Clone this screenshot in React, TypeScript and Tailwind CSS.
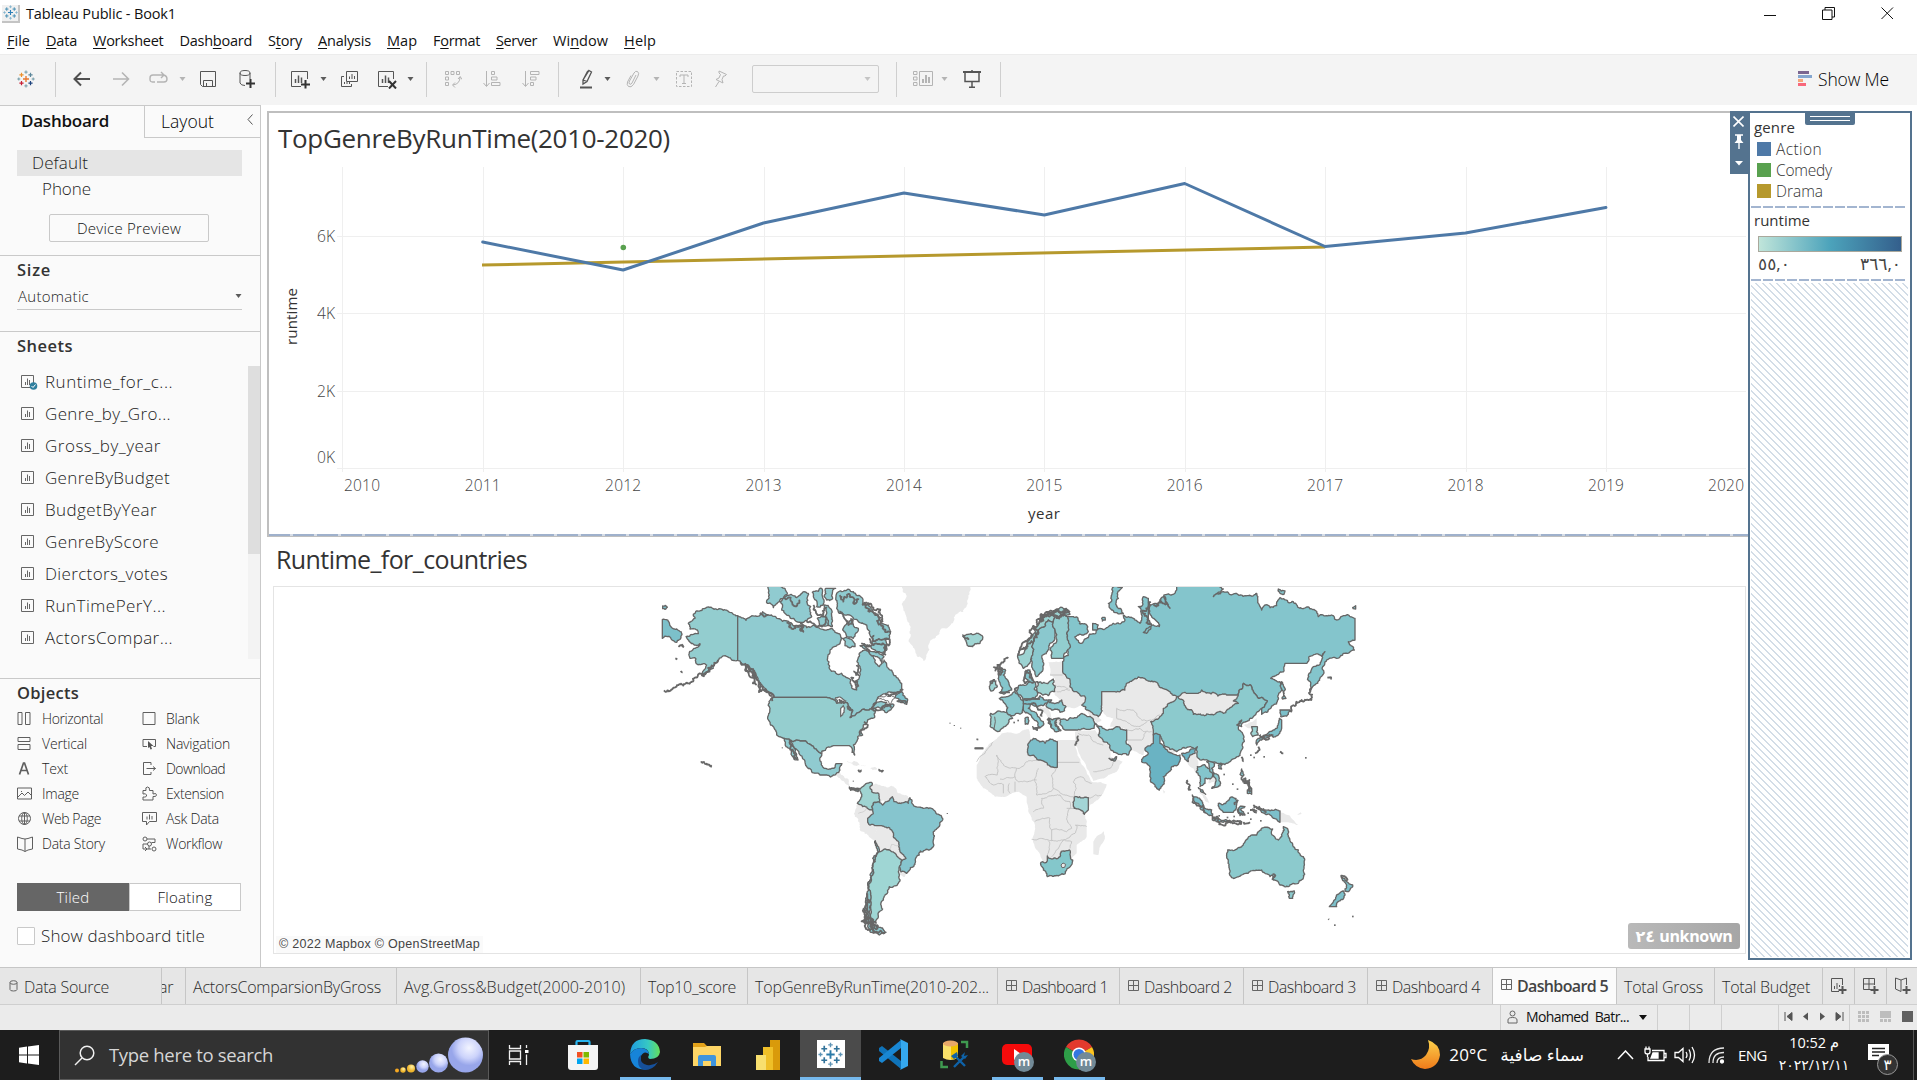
import { useLayoutEffect, useRef, useState, type ReactNode } from "react";

/* Text whose letter spacing is adjusted so that it spans exactly `w` pixels. */
function Fit({ w, className = "", children }: { w: number; className?: string; children: ReactNode }) {
  const ref = useRef<HTMLSpanElement>(null);
  const [ls, setLs] = useState(0);
  useLayoutEffect(() => {
    const el = ref.current;
    if (!el) return;
    const n = Math.max(1, (el.textContent || "").length);
    setLs((w - el.getBoundingClientRect().width) / n);
  }, [w]);
  return (
    <span className={`inline-block shrink-0 whitespace-nowrap ${className}`}>
      <span ref={ref} style={{ letterSpacing: `${ls}px` }}>{children}</span>
    </span>
  );
}

function Icon({ w = 18, h = 18, c = "#5b5b5b", sw = 1, className = "", children }: { w?: number; h?: number; c?: string; sw?: number; className?: string; children: ReactNode }) {
  return (
    <svg width={w} height={h} viewBox={`0 0 ${w} ${h}`} fill="none" stroke={c} strokeWidth={sw} className={`block shrink-0 ${className}`}>
      {children}
    </svg>
  );
}

function Mark({ size, colors }: { size: number; colors: string[] }) {
  const plus = (x: number, y: number, r: number, sw: number, c: string) => (
    <path key={`${x}-${y}`} d={`M${x - r} ${y}H${x + r}M${x} ${y - r}V${y + r}`} stroke={c} strokeWidth={sw} />
  );
  return (
    <svg width={size} height={size} viewBox="0 0 24 24" className="block shrink-0">
      {plus(12, 12, 4, 1.8, colors[0])}
      {plus(6, 6.5, 2.8, 1.6, colors[1])}
      {plus(18, 6.5, 2.8, 1.6, colors[2])}
      {plus(6, 17.5, 2.8, 1.6, colors[3])}
      {plus(18, 17.5, 2.8, 1.6, colors[4])}
      {plus(12, 2.8, 2.2, 1.3, colors[5])}
      {plus(12, 21.2, 2.2, 1.3, colors[5])}
      {plus(2.4, 12, 2, 1.3, colors[5])}
      {plus(21.6, 12, 2, 1.3, colors[5])}
    </svg>
  );
}

const Caret = ({ c = "#5b5b5b" }: { c?: string }) => (
  <svg width="7" height="4" viewBox="0 0 7 4" className="block shrink-0"><path d="M0.500 0H6.500L3.500 4Z" fill={c} /></svg>
);

const menu: [string, string, string, number][] = [
  ["", "F", "ile", 23], ["", "D", "ata", 31], ["", "W", "orksheet", 70.500], ["Dash", "b", "oard", 72.500], ["S", "t", "ory", 34], ["", "A", "nalysis", 53],
  ["", "M", "ap", 30], ["F", "o", "rmat", 47], ["", "S", "erver", 41], ["Wi", "n", "dow", 55], ["", "H", "elp", 32],
];

/* One toolbar slot: left edge is reached by the margin after the previous slot. */
function Slot({ ml, children }: { ml: string; children: ReactNode }) {
  return <div className={`shrink-0 ${ml}`}>{children}</div>;
}
const Sep = ({ ml }: { ml: string }) => <div className={`h-[35px] w-px shrink-0 bg-[#cfcfcf] ${ml}`} />;

function Toolbar() {
  const g = "#b4b4b4";
  return (
    <div className="flex h-[51px] shrink-0 items-center border-t border-[#ececec] bg-[#f4f4f4] pb-[2px]">
      <Slot ml="ml-[17px]"><Mark size={18} colors={["#e8762d", "#eb912c", "#5b879b", "#c72035", "#1f447e", "#7099a6"]} /></Slot>
      <Sep ml="ml-[20px]" />
      <Slot ml="ml-[17px]"><Icon sw={2} c="#4f4f4f"><path d="M17 9H1.500M8 2.500L1.500 9L8 15.500" /></Icon></Slot>
      <Slot ml="ml-[21px]"><Icon sw={1.6} c={g}><path d="M1 9H16.500M10 2.500L16.500 9L10 15.500" /></Icon></Slot>
      <Slot ml="ml-[19px]"><Icon w={19} sw={1.4} c={g}><path d="M6 12H3.500Q1 12 1 9.500V8Q1 5 4 5H15M12 2L15 5L12 8M15 5Q18 6 18 9Q18 12 15 12H8" /></Icon></Slot>
      <Slot ml="ml-[11px]"><Caret c={g} /></Slot>
      <Slot ml="ml-[13px]"><Icon c="#555"><path d="M1.500 1.500H16.500V16.500H3.500L1.500 14.500ZM4.500 16V10.500H13.500V16M7.500 16V13" /></Icon></Slot>
      <Slot ml="ml-[21px]"><Icon w={18} h={20} c="#555"><ellipse cx="7" cy="4" rx="5" ry="2.500" /><path d="M2 4V14Q3 16.500 7 16.500M12 4V10" /><path d="M12.500 10V19M8 14.500H17" strokeWidth="2" stroke="#333" /></Icon></Slot>
      <Sep ml="ml-[19px]" />
      <Slot ml="ml-[14px]"><Icon w={20} h={20} c="#555"><path d="M17.500 10V2.500H1.500V17.500H11" /><path d="M5.500 14V10M8.500 14V6.500M11.500 14V8.500" strokeWidth="1.500" /><path d="M15.500 11V19.500M11 15.500H20" strokeWidth="2" stroke="#333" /></Icon></Slot>
      <Slot ml="ml-[10px]"><Caret /></Slot>
      <Slot ml="ml-[13px]"><Icon w={18} h={18} c="#555"><path d="M6.500 1.500H17.500V11.500H6.500ZM9.500 9V6.500M12 9V4M14.500 9V6M4 6.500H1.500V16.500H11.500V14M4.500 14V12M7 14V12M9.500 14V12" /></Icon></Slot>
      <Slot ml="ml-[19px]"><Icon w={20} h={20} c="#555"><path d="M16.500 10V2.500H1.500V17.500H11" /><path d="M5.500 14V10M8.500 14V6.500M11.500 14V8.500" strokeWidth="1.500" /><path d="M12 12L19 19.500M19 12L12 19.500" strokeWidth="2" stroke="#333" /></Icon></Slot>
      <Slot ml="ml-[10px]"><Caret /></Slot>
      <Sep ml="ml-[12px]" />
      <Slot ml="ml-[17px]"><Icon c={g}><path d="M1.500 1.500H4.500V4.500H1.500ZM7 1.500H10V4.500H7ZM12.500 1.500H15.500V4.500H12.500ZM1.500 7H4.500V10H1.500ZM1.500 12.500H4.500V15.500H1.500ZM16 7Q16 14 9 15M14 9L16.200 6.500L18 9.500M11 12.500L8.500 15L11 17.500" /></Icon></Slot>
      <Slot ml="ml-[20px]"><Icon w={19} c={g}><path d="M4.500 1V16M1.500 13L4.500 16.500L7.500 13M9.500 1.500H12.500V4.500H9.500ZM9.500 7H15V10H9.500ZM9.500 12.500H18V15.500H9.500Z" /></Icon></Slot>
      <Slot ml="ml-[20px]"><Icon w={19} c={g}><path d="M4.500 1V16M1.500 13L4.500 16.500L7.500 13M9.500 1.500H18V4.500H9.500ZM9.500 7H15V10H9.500ZM9.500 12.500H12.500V15.500H9.500Z" /></Icon></Slot>
      <Sep ml="ml-[18px]" />
      <Slot ml="ml-[20px]"><Icon w={15} h={20} c="#555" sw={1.300}><path d="M10 1.500L12.500 3L8 12.500L4 15L4 11Z M4 11L8 12.500M4 11L8.500 2.500L10 1.500" /><path d="M1 18.500H13" strokeWidth="2" /></Icon></Slot>
      <Slot ml="ml-[10px]"><Caret /></Slot>
      <Slot ml="ml-[15px]"><Icon w={14} h={18} c={g}><path d="M10 5L6 13Q5 15 3.500 14Q2.500 13 3.500 11L8 3Q9.500 0.500 11.500 1.500Q13.500 3 12 6L7.500 14.500Q5 18 2.500 16.500Q0.500 15 1.500 12L5 5.500" /></Icon></Slot>
      <Slot ml="ml-[13px]"><Caret c={g} /></Slot>
      <Slot ml="ml-[15px]"><Icon c={g}><path d="M1.500 1.500H16.500V16.500H1.500Z" strokeDasharray="2.500 1.500" /><path d="M5 7V5H13V7M9 5V13M7 13.500H11" /></Icon></Slot>
      <Slot ml="ml-[20px]"><Icon w={15} h={18} c={g}><path d="M6 1L13.500 4.500L12 6L10.500 6L9 9.500L10 13L3 9.500L6 8L7.500 4.500L6 3ZM6 11.500L2.500 17" /></Icon></Slot>
      <div className="ml-[24px] flex h-[28px] w-[127px] shrink-0 items-center justify-end rounded-[2px] border border-[#cdcdcd] pr-[7px]"><Caret c="#c4c4c4" /></div>
      <Sep ml="ml-[17px]" />
      <Slot ml="ml-[16px]"><Icon w={21} c={g}><path d="M0.500 1.500H4V4.500H0.500ZM0.500 7H4V10H0.500ZM0.500 12.500H4V15.500H0.500ZM6.500 1.500H19.500V15.500H6.500Z" /><path d="M10 13V9M13 13V5M16 13V7" strokeWidth="2" /></Icon></Slot>
      <Slot ml="ml-[7px]"><Caret c={g} /></Slot>
      <Slot ml="ml-[15px]"><Icon w={18} h={18} c="#555"><path d="M0 2H18" strokeWidth="2" /><path d="M2 3V11.500H16V3M9 12V17M6 17.200H12M9 0V2" strokeWidth="1.500" /></Icon></Slot>
      <Sep ml="ml-[19px]" />
      <div className="grow" />
      <svg width="15" height="16" className="mr-[5px] block"><rect width="11" height="3" y="0" fill="#7b6690" /><rect width="14" height="3" y="4" fill="#85a6cf" /><rect width="5" height="3" y="8" fill="#f5a67a" /><rect width="8" height="3" y="12" fill="#f8687b" /></svg>
      <Fit w={71} className="mr-[28px] text-[17.500px] font-light leading-6 text-black">Show Me</Fit>
    </div>
  );
}

const sheets: [string, number][] = [
  ["Runtime_for_c...", 128], ["Genre_by_Gro...", 126], ["Gross_by_year", 116], ["GenreByBudget", 125], ["BudgetByYear", 112],
  ["GenreByScore", 114], ["Dierctors_votes", 123], ["RunTimePerY...", 121], ["ActorsCompar...", 128],
];

const objIcons: Record<string, ReactNode> = {
  Horizontal: <path d="M1 1.500H5V13.500H1ZM8.500 1.500H13V13.500H8.500Z" />,
  Vertical: <path d="M1 1.500H13V5.500H1ZM1 8.500H13V13.500H1Z" />,
  Text: <path d="M2.500 13.500L6.500 2H7.500L11.500 13.500M4 9.500H10" strokeWidth="1.700" />,
  Image: <path d="M0.500 2H14.500V13H0.500ZM1 11L5 7L7.500 9.500L11 6L14 9M4 5.500H5" />,
  "Web Page": <><circle cx="7.500" cy="7.500" r="6" /><ellipse cx="7.500" cy="7.500" rx="2.800" ry="6" /><path d="M2 5H13M2 10H13M7.500 1.500V13.500" /></>,
  "Data Story": <path d="M0.500 1L5 2.500L8 3L11 2.500L15.500 1V13L11 14L8 15.500L5 14L0.500 13ZM8 3V15.500" />,
  Blank: <path d="M1 1.500H13V13.500H1Z" />,
  Navigation: <><path d="M5 10.500H1V3.500H13.500V10.500H11.500" /><path d="M6 5L11.500 10H9L10 13L8.500 13.500L7.500 11L6 12Z" fill="#555" stroke="none" /></>,
  Download: <path d="M9 4V1.500H1.500V13.500H9V11M4.500 7.500H13.500M11 5.500L13.500 7.500L11 9.500" />,
  Extension: <path d="M1 4.500H4Q3 1 5.500 1Q8 1 7.500 4.500H11V8Q14.500 6.500 14.500 9Q14.500 11 11 10.500V14H1V11Q5 11.500 4.500 9Q4 7 1 8Z" />,
  "Ask Data": <path d="M0.500 1.500H14.500V10.500H7.500L4.500 14V10.500H0.500ZM5 8.500V5.500M7.500 8.500V3.500M10 8.500V5" />,
  Workflow: <><circle cx="3" cy="3" r="2" /><circle cx="7.500" cy="8" r="2" /><circle cx="12" cy="13" r="2" /><path d="M5 3H13V6.500H9.500M5.500 8H1V13H9M3 11L5 13L3 15M7 13V10" /></>,
};
const objects: [string, number, string, number][] = [
  ["Horizontal", 61, "Blank", 33], ["Vertical", 45, "Navigation", 64], ["Text", 26, "Download", 59],
  ["Image", 37, "Extension", 58], ["Web Page", 59, "Ask Data", 53], ["Data Story", 63, "Workflow", 56],
];

function Sidebar() {
  return (
    <aside className="flex h-full w-[261px] shrink-0 flex-col border-r border-[#c9c9c9] bg-[#fafafa] text-[#1c1c1c]">
      <div className="flex h-[33px] shrink-0 border-t border-[#c9c9c9]">
        <div className="w-[144px] pl-[21px] pt-[3px]"><Fit w={88} className="text-[17px] font-semibold leading-6 text-[#111]">Dashboard</Fit></div>
        <div className="flex grow items-start border-b border-l border-[#c9c9c9] pl-[16px] pt-[3px]">
          <Fit w={53} className="text-[17.500px] font-light leading-6 text-black">Layout</Fit>
          <Icon w={6} h={11} c="#555" className="ml-[33px] mt-[5px]"><path d="M5.500 0.500L1 5.500L5.500 10.500" /></Icon>
        </div>
      </div>
      <div className="mx-[17px] mt-[12px] mr-[18px] flex h-[26px] shrink-0 items-center bg-[#e5e5e5] pl-[15px]"><Fit w={56} className="text-[17px] font-light leading-6">Default</Fit></div>
      <div className="flex h-[26px] shrink-0 items-center pl-[42px]"><Fit w={49} className="text-[17px] font-light leading-6">Phone</Fit></div>
      <div className="ml-[49px] mt-[12px] flex h-[28px] w-[160px] shrink-0 items-center justify-center rounded-[2px] border border-[#c9c9c9]"><Fit w={104} className="text-[15px] font-light leading-5 text-[#111]">Device Preview</Fit></div>
      <div className="mt-[13px] flex h-[76px] shrink-0 flex-col border-t border-[#c9c9c9] px-[17px] pt-[2px]">
        <Fit w={34} className="h-[24px] text-[16.500px] font-semibold leading-6 text-[#333]">Size</Fit>
        <div className="mr-px mt-[3px] flex h-[25px] items-center justify-between border-b border-[#c9c9c9] pb-[2px] pl-px"><Fit w={71} className="text-[15px] font-light leading-5">Automatic</Fit><Caret /></div>
      </div>
      <div className="flex h-[347px] shrink-0 flex-col border-t border-[#c9c9c9] pt-[2px]">
        <Fit w={56} className="ml-[17px] h-[24px] text-[16.500px] font-semibold leading-6 text-[#333]">Sheets</Fit>
        <div className="mt-[8px] flex h-[293px] justify-between">
          <div className="flex flex-col pl-[21px]">
            {sheets.map(([s, w], i) => (
              <div key={s} className="flex h-[32px] items-center gap-[7px]">
                <Icon w={17} h={16} c="#666">
                  <path d="M0.500 1.500H12.500V13.500H0.500ZM4.500 11V8M6.500 11V4.500M8.500 11V6" />
                  {i === 0 && <><circle cx="12.500" cy="12" r="3.800" fill="#2f7f9f" stroke="none" /><path d="M10.500 12L12 13.500L14.500 10.500" stroke="#fff" /></>}
                </Icon>
                <Fit w={w} className="text-[17px] font-light leading-6">{s}</Fit>
              </div>
            ))}
          </div>
          <div className="w-[12px] bg-[#f3f3f3]"><div className="h-[188px] bg-[#dedede]" /></div>
        </div>
      </div>
      <div className="flex shrink-0 flex-col border-t border-[#c9c9c9] px-[17px] pt-[2px]">
        <Fit w={62} className="h-[24px] text-[16.500px] font-semibold leading-6 text-[#333]">Objects</Fit>
        <div className="mt-px flex flex-col">
          {objects.map(([a, wa, b, wb]) => (
            <div key={a} className="flex h-[25px] items-center">
              <div className="flex w-[125px] items-center"><Icon w={16} h={16} c="#5f5f5f" className="mr-[9px]">{objIcons[a]}</Icon><Fit w={wa} className="text-[14px] font-light leading-5">{a}</Fit></div>
              <div className="flex items-center"><Icon w={16} h={16} c="#5f5f5f" className="mr-[8px]">{objIcons[b]}</Icon><Fit w={wb} className="text-[14px] font-light leading-5">{b}</Fit></div>
            </div>
          ))}
        </div>
        <div className="mt-[27px] flex h-[28px] w-[224px]">
          <div className="flex w-[112px] items-center justify-center bg-[#666]"><Fit w={33} className="text-[15px] font-light leading-5 text-white">Tiled</Fit></div>
          <div className="flex w-[112px] items-center justify-center border border-[#c9c9c9] bg-white"><Fit w={55} className="text-[15px] font-light leading-5 text-[#111]">Floating</Fit></div>
        </div>
        <div className="mt-[13px] flex h-[24px] items-center gap-[6px]">
          <div className="size-[18px] rounded-[1px] border border-[#c9c9c9] bg-white" />
          <Fit w={164} className="text-[17px] font-light leading-6">Show dashboard title</Fit>
        </div>
      </div>
    </aside>
  );
}

/* Line chart, drawn in page-sized units starting at (269, 162). */
const years = [2010, 2011, 2012, 2013, 2014, 2015, 2016, 2017, 2018, 2019, 2020];
const yearX = (i: number) => 342.300 + i * 140.400;
const action = [242, 270, 223, 193, 215, 183.500, 246.500, 233, 207.500];

function LineChart() {
  return (
    <svg width="1479" height="373" viewBox="269 162 1479 373" className="block shrink-0" fontFamily="'Open Sans','Noto Sans',sans-serif" fontSize="15.500" fontWeight="300">
      <g stroke="#efefef" shapeRendering="crispEdges">
        {years.slice(0, 10).map((y, i) => <path key={y} d={`M${Math.round(yearX(i)) + 0.5} 167V472`} />)}
        {[236, 313, 391, 468].map((y) => <path key={y} d={`M337 ${y + 0.5}H1746`} />)}
      </g>
      <g fill="#444">
        {([["6K", 236.500], ["4K", 313.500], ["2K", 391.500], ["0K", 457.500]] as [string, number][]).map(([t, y]) => <text key={t} x="335" y={y + 5.500} textAnchor="end" textLength="18" lengthAdjust="spacingAndGlyphs">{t}</text>)}
        {years.map((y, i) => <text key={y} x={i === 0 ? 344 : i === 10 ? 1708 : yearX(i) - 18} y="491" textLength="36">{y}</text>)}
      </g>
      <g fill="#333" fontSize="15" fontWeight="400">
        <text x="1028" y="518.500" textLength="32">year</text>
        <text transform="translate(297 345) rotate(-90)" textLength="57">runtime</text>
      </g>
      <path d="M482 265L1325 247" stroke="#b6992d" strokeWidth="3" />
      <path d={"M" + action.map((y, i) => `${yearX(i + 1)} ${y}`).join("L")} fill="none" stroke="#4e79a7" strokeWidth="3" strokeLinejoin="round" strokeLinecap="round" />
      <circle cx="623.300" cy="247.500" r="2.800" fill="#59a14f" />
    </svg>
  );
}

/* Coastline helper: subdivides each edge and offsets the new points by a
   position-based hash, so neighbouring countries share the same border. */
type Pt = [number, number];
const hash = (x: number, y: number) => {
  const s = Math.sin(x * 12.9898 + y * 78.233) * 43758.5453;
  return s - Math.floor(s) - 0.5;
};
function split(a: Pt, b: Pt, k: number, out: Pt[], depth = 6) {
  const d = Math.hypot(b[0] - a[0], b[1] - a[1]);
  if (d < 5 || k === 0 || depth === 0) { out.push(b); return; }
  const mx = Math.round((a[0] + b[0]) * 5) / 10, my = Math.round((a[1] + b[1]) * 5) / 10;
  const m: Pt = [mx + hash(mx, my) * d * k, my + hash(my, mx) * d * k];
  split(a, m, k, out, depth - 1);
  split(m, b, k, out, depth - 1);
}
function land(s: string, k = 0.42, closed = true) {
  const p = s.trim().split(/\s+/).map((q) => q.split(",").map(Number) as Pt);
  const out: Pt[] = [p[0]];
  for (let i = 1; i < p.length; i++) split(p[i - 1], p[i], p[i - 1][0] === p[i][0] || p[i - 1][1] === p[i][1] ? 0 : k, out);
  if (closed) split(p[p.length - 1], p[0], p[p.length - 1][0] === p[0][0] ? 0 : k, out);
  return "M" + out.map(([x, y]) => `${x.toFixed(1)} ${y.toFixed(1)}`).join("L") + (closed ? "Z" : "");
}

const westGray = [
  "785,33 990,33 985,70 970,110 935,145 910,160 885,190 865,210 862,235 850,258 832,245 815,210 808,170 800,130 790,100",
  "580,600 592,590 612,604 625,612 628,635 618,628 600,610",
  "620,558 650,560 680,574 655,570 630,562", "690,580 705,576 712,582 698,586",
  "690,635 697,628 720,630 755,632 775,655 805,665 805,685 780,684 762,680 757,665 740,680 718,682 716,655 695,650",
  "652,685 668,695 698,706 700,715 683,730 683,742 705,752 708,795 670,770 655,740 642,715",
  "705,752 725,752 758,770 760,785 775,800 780,830 798,850 785,855 748,825 730,824 718,830 706,797",
  "778,875 800,895 795,905 778,900",
];
const west: [string, string][] = [
  ["#93cdcf", "293,256 275,255 262,245 245,246 235,256 222,270 200,292 185,302 192,285 200,270 190,266 172,268 168,252 150,250 148,232 160,222 178,212 180,206 150,202 138,185 160,178 175,176 172,165 150,162 145,145 165,130 160,118 172,108 195,100 205,96 222,103 250,106 270,112 293,122"],
  ["#7cc0ca", "67,134 92,154 110,162 126,178 110,202 96,195 85,184 67,190"],
  ["#7cc0ca", "68,93 76,91 82,97 75,103 68,101"],
  ["#90cbd0", "293,122 318,136 330,126 350,124 368,110 385,120 405,124 420,132 440,138 460,152 490,150 500,158 520,150 535,158 555,165 575,160 585,172 600,178 608,190 600,206 590,212 575,222 563,250 568,280 590,296 615,304 632,315 636,340 650,345 652,315 660,300 655,270 658,235 675,225 690,235 700,245 705,262 718,275 732,255 745,280 760,298 785,325 785,345 765,352 735,356 712,372 700,392 720,380 740,382 725,398 705,400 690,402 660,410 630,428 635,405 625,392 610,380 590,385 575,372 560,367 400,367 385,350 370,335 355,320 345,300 330,285 315,270 300,258 293,256"],
  ["#95cecf", "400,367 560,367 575,372 590,385 610,380 625,392 635,405 630,428 660,410 690,402 705,400 703,428 685,434 670,450 668,480 650,500 640,510 644,540 636,532 628,512 600,512 580,512 560,518 546,528 545,536 530,525 515,512 497,498 480,498 460,500 432,490 415,484 400,455 388,438 390,400 387,380"],
  ["#90cbd0", "432,490 460,500 480,498 497,498 515,512 530,525 545,536 543,560 550,578 565,583 582,580 588,566 606,566 600,585 580,600 572,606 560,600 540,600 515,590 500,575 495,560 480,540 465,520 448,497 455,512 470,540 474,555 458,545 448,520 436,505"],
  ["#90cbd0", "385,33 420,33 442,55 430,70 418,80 400,98 382,85 388,60"],
  ["#90cbd0", "420,80 440,62 470,68 492,50 505,55 500,80 512,95 515,125 495,138 470,140 440,120 425,105"],
  ["#90cbd0", "590,100 588,65 600,48 640,50 662,65 668,90 690,95 715,120 725,145 752,170 748,190 735,195 740,225 730,238 705,225 690,210 665,205 690,215 700,195 690,180 680,150 655,140 640,130 615,120"],
  ["#90cbd0", "517,52 545,40 550,90 530,95"], ["#90cbd0", "558,40 587,40 578,70 560,75"], ["#90cbd0", "553,90 570,100 577,155 560,140"],
  ["#90cbd0", "608,165 635,135 640,150 655,160 640,190 620,185"], ["#90cbd0", "610,190 640,200 645,215 615,212"], ["#90cbd0", "532,130 558,128 565,150 540,152"],
  ["#90cbd0", "660,212 690,228 715,232 732,245 725,262 712,245 690,238"],
  ["#7cc0ca", "765,368 785,350 803,375 800,388 780,382"], ["#90cbd0", "725,402 762,390 755,400 735,412"],
  ["#a0d5d3", "968,180 985,178 1015,175 1028,190 1020,205 998,215 980,205"],
  ["#9fd4d2", "690,622 676,628 660,648 662,672 652,685 668,695 698,706 702,682 718,682 716,655 695,650 690,635 697,625"],
  ["#8ccacf", "628,636 640,645 658,640 654,650 632,646"],
  ["#86c5ce", "702,682 715,680 728,690 740,680 757,665 762,680 780,684 805,685 810,668 820,690 850,700 885,708 905,725 906,738 885,765 880,805 868,825 830,845 825,868 800,895 778,875 798,850 780,830 775,800 760,785 758,770 725,752 705,752 683,742 683,730 700,715 698,706"],
  ["#9fd6d4", "718,830 730,824 748,825 785,855 782,870 775,890 780,918 770,932 748,935 742,955 730,970 722,988 728,1002 715,1025 708,1045 690,1040 692,1000 692,960 698,900 705,860"],
  ["#8ccad0", "706,797 718,830 705,860 698,900 692,960 690,1040 712,1055 738,1072 718,1080 690,1070 675,1040 672,1000 680,960 690,900 698,850"],
];
const eastGray = [
  "125,475 205,462 210,495 290,495 345,495 350,525 375,580 395,620 440,628 430,655 390,690 375,720 380,760 380,785 350,810 350,835 335,850 300,865 250,865 235,830 218,790 225,750 205,710 200,680 200,665 175,650 150,658 105,665 70,640 50,610 50,570 75,525 100,500",
  "400,800 432,768 435,790 415,840 400,838",
  "265,262 308,260 308,290 325,310 330,335 350,350 375,365 365,390 340,400 318,395 305,375 284,360 284,310 270,300",
  "235,390 265,400 275,430 300,430 295,450 275,455 262,425 240,405",
  "425,350 465,350 495,345 500,325 545,308 585,320 630,350 652,365 640,380 610,400 610,415 572,440 580,465 580,480 580,505 555,525 550,540 512,525 500,495 500,465 475,455 450,455 460,430 440,425 425,400",
  "380,405 415,425 425,435 410,445 395,428",
  "652,365 680,355 715,355 725,345 760,352 800,360 835,360 820,378 835,385 810,398 790,415 760,420 700,418 680,400 672,380",
  "345,470 405,465 430,500 450,520 452,545 475,555 488,560 470,590 440,605 400,618 380,580 360,540 345,505",
  "680,560 690,540 705,530 715,560 715,600 700,580 690,575",
  "735,575 750,570 765,600 765,620 745,625 750,605", "612,510 650,530 640,534 615,522", "850,450 890,430 890,452 865,460",
  "962,712 990,722 1015,750 985,742 962,742", "608,645 616,650 612,656", "715,650 735,660 748,685 735,678",
  "1010,720 1022,712 1025,716",
];
const east: [string, string][] = [
  ["#84c5cc", "650,33 775,33 790,42 760,65 790,50 830,55 865,62 890,55 895,85 905,105 915,90 950,92 960,68 1000,80 1025,100 1055,102 1075,125 1120,122 1130,135 1150,122 1185,130 1185,195 1165,200 1183,225 1150,235 1130,250 1100,255 1088,275 1080,310 1050,348 1045,300 1060,275 1085,255 1095,230 1085,244 1065,238 1040,265 975,265 932,310 960,320 955,360 940,390 920,412 905,418 905,400 922,378 895,370 880,350 872,330 850,325 838,345 835,360 800,360 760,352 725,345 715,355 680,355 652,365 630,350 595,330 585,320 545,308 500,325 495,345 465,350 425,350 425,390 420,420 415,425 380,405 365,390 375,365 350,350 330,335 325,310 308,290 308,260 325,240 320,190 325,150 315,125 340,125 380,150 385,170 365,180 345,185 360,205 380,190 420,160 460,145 495,135 490,120 520,130 540,145 535,95 550,65 565,70 565,130 575,150 560,175 550,172 580,150 598,155 580,130 570,90 585,85 600,80 615,65 630,100 612,60 650,45"],
  ["#84c5cc", "465,33 487,37 475,70 470,95 490,115 455,105 445,85 455,60"], ["#84c5cc", "965,320 975,340 978,370 968,372"],
  ["#84c5cc", "398,145 415,150 410,165 398,165"], ["#84c5cc", "425,130 435,127 436,135 427,138"], ["#84c5cc", "955,42 975,48 972,58 960,55"], ["#84c5cc", "1178,98 1187,92 1187,102"],
  ["#9dd3d2", "173,240 200,210 215,180 235,150 240,130 270,115 300,98 330,118 315,120 300,122 280,140 265,135 240,160 222,195 215,215 218,240 212,260 190,280 178,265"],
  ["#8ac8ce", "222,195 240,160 265,135 280,140 285,165 285,185 270,205 262,230 248,260 245,290 228,305 218,280 215,250 218,240 215,215"],
  ["#92cdcf", "280,140 300,122 315,120 325,155 322,190 328,220 310,250 275,250 270,225 290,200 285,165"],
  ["#84c5cc", "195,290 210,285 215,305 222,320 205,325 195,310"],
  ["#84c5cc", "118,278 135,283 130,300 148,330 155,345 130,357 118,353 128,338 118,320 115,300"],
  ["#9dd3d2", "90,320 108,318 112,335 95,348 88,335"],
  ["#8ac8ce", "118,370 140,365 165,350 185,375 190,395 188,412 170,415 150,420 140,412 138,390"],
  ["#9dd3d2", "92,415 140,412 150,420 158,430 140,450 120,468 105,465 95,458"],
  ["#8ac8ce", "170,350 182,330 225,320 232,360 215,378 190,375 182,360"],
  ["#a0d5d3", "230,320 280,312 284,350 265,362 232,350"],
  ["#84c5cc", "190,385 215,380 205,400 240,430 250,440 240,458 232,440 205,415 190,405"],
  ["#7cc0ca", "190,375 215,370 240,362 250,372 275,375 268,385 250,392 215,388 190,385"], ["#8ac8ce", "195,430 205,428 204,447 196,448"], ["#7cc0ca", "218,455 235,458 232,466 220,462"],
  ["#8ac8ce", "265,378 305,375 318,395 300,412 275,405 258,390"],
  ["#84c5cc", "265,432 300,430 285,442 300,465 285,470 272,450"],
  ["#8ac8ce", "300,435 340,430 395,428 405,445 402,460 340,465 315,465 302,450"],
  ["#84c5cc", "405,445 425,455 440,465 470,455 500,465 500,495 512,525 505,540 475,538 450,520 430,500 415,480"],
  ["#84c5cc", "447,550 470,545 465,558"],
  ["#8ccacd", "652,365 672,380 680,400 700,418 760,420 790,415 810,398 835,385 820,378 835,360 838,345 850,325 872,330 880,350 895,370 922,378 905,400 870,430 845,455 830,450 845,435 835,460 850,480 848,520 835,545 810,560 775,565 750,560 715,550 710,525 690,515 650,530 615,515 600,480 580,480 580,465 572,440 610,415 610,400 640,380"],
  ["#9dd3d2", "875,455 892,455 895,480 878,485"], ["#8ac8ce", "775,570 787,568 785,582 776,580"],
  ["#7cc0ca", "895,490 920,478 940,465 955,445 958,430 965,435 965,460 955,480 930,482 905,495 890,510"],
  ["#7cc0ca", "960,405 990,405 985,418 962,425"],
  ["#6ab3c3", "580,478 600,480 600,505 615,520 660,540 658,560 635,575 610,605 608,630 598,645 585,635 570,600 565,570 545,560 552,545 565,535 555,525 580,505"],
  ["#6ab3c3", "665,535 690,525 712,515 705,535 690,540 685,560 670,545"],
  ["#84c5cc", "712,575 735,570 758,600 750,612 735,610 735,625 720,635 715,600"],
  ["#8ac8ce", "740,560 765,565 755,580 778,610 775,635 755,640 768,615 750,590"], ["#84c5cc", "715,638 728,645 737,658 722,650"],
  ["#7cbfca", "697,660 720,672 755,705 758,725 735,712 715,685"], ["#7cbfca", "757,727 800,735 845,740 843,748 790,742 757,735"],
  ["#7cbfca", "775,685 790,688 810,668 828,670 830,690 820,712 790,712 778,700"],
  ["#7cbfca", "835,700 855,695 842,705 855,720 840,722"], ["#7cbfca", "890,700 925,705 960,708 960,742 940,730 905,712"],
  ["#84c5cc", "845,582 852,600 848,605 840,598"], ["#84c5cc", "862,645 875,640 875,658 862,655"],
  ["#8ccacd", "803,825 850,810 875,780 890,780 905,760 938,762 935,778 955,795 965,785 970,755 985,785 1000,815 1015,825 1033,850 1032,880 1015,925 985,935 960,930 940,915 938,900 930,905 905,885 870,890 845,900 815,908 808,880 805,855 800,840"],
  ["#8ccacd", "983,950 1003,948 998,970 988,970"],
  ["#7cc0ca", "1143,903 1160,920 1178,930 1165,950 1155,948 1160,930"], ["#7cc0ca", "1150,948 1155,960 1130,995 1108,995 1120,980"],
  ["#7cbfca", "203,510 220,490 255,505 270,492 292,500 292,577 235,555 205,540"],
  ["#a3d5d6", "345,665 385,668 385,705 373,718 343,700"],
  ["#84c7cb", "243,862 262,858 262,843 275,852 300,845 310,828 328,825 338,855 320,885 300,900 262,905 250,885"],
];
const westBold = [
  "235,256 222,272 205,290 190,303 160,318 130,332 100,338 72,346", "300,262 318,272 335,290 348,308 360,330 385,352 398,378", "325,270 345,292 352,310", "315,265 330,280 345,300", "355,325 380,350 395,365", "318,275 340,305 350,330",
  "672,1000 678,1045 700,1072 735,1074", "682,955 682,1000 690,1040 715,1060", "685,1030 700,1050 712,1062", "680,975 678,1010 695,1055", "676,1020 690,1065 715,1075",
  "668,90 700,100 722,140 750,172", "690,190 735,210 738,240", "680,88 712,120 718,150", "700,180 740,190 735,225", "440,142 470,152 490,170 480,145", "600,60 610,80 630,60 640,85 655,70", "430,70 460,90 480,75", "520,90 550,120 560,100", "598,110 625,150 635,130", "360,118 385,120", "500,138 525,150 560,130",
  "632,310 650,340", "640,290 655,300 650,270", "735,356 760,358 790,345", "770,378 802,382", "700,388 725,404 755,396", "598,372 612,385 602,375", "620,395 640,408", "715,584 730,585", "655,584 665,586", "182,562 200,566 212,577", "660,480 672,440", "115,213 132,217", "106,250 112,253", "122,288 128,292", "448,500 462,535 474,552",
  "968,182 985,195", "1003,520 1030,520", "630,640 655,645",
];
const eastBold = [
  "175,240 205,205 235,148 270,115 320,100", "230,150 250,125 290,105 330,112", "180,225 210,190 228,160", "240,140 275,108 325,104", "100,275 120,270 145,250", "105,285 125,280 118,300", "110,270 118,300", "195,290 212,300 218,318", "200,285 210,320", "175,340 165,350", "90,325 105,315",
  "352,482 346,512", "190,372 240,372", "215,390 245,425", "268,430 275,455", "1052,348 1030,380 990,408", "850,610 870,640", "848,615 865,625 872,650", "845,605 860,625 868,615 875,640", "835,700 850,720", "880,690 900,700 920,712", "757,730 845,745", "870,705 890,710",
  "1143,903 1158,918", "940,895 938,915", "905,490 940,482", "900,480 930,490", "885,535 895,515", "845,545 848,560", "835,675 825,690", "680,615 690,645", "700,668 735,715", "850,745 870,742", "45,520 70,520", "230,465 240,460",
  "120,352 150,352", "290,440 300,468", "880,705 890,712", "960,530 970,535", "1102,308 1115,312", "1105,1032 1107,1034", "580,90 600,75 625,90", "565,80 572,150",
];
const grayBorders = [
  "100,500 75,535 50,560", "110,540 112,600 75,605", "110,540 170,580 235,555", "170,580 165,605 120,612", "292,562 358,562", "292,577 275,600 280,640 315,660", "280,640 230,660 225,620 235,580", "165,605 175,620 230,615",
  "165,650 165,620", "130,655 130,628", "150,655 148,625", "75,605 100,630 130,628", "315,660 345,665", "345,665 340,620 360,605 395,625", "245,670 250,700 220,710", "245,670 300,660 330,680 320,730 335,760 320,770 275,765 270,730 225,740",
  "275,765 275,797 215,793", "275,797 310,795 345,775 350,750", "380,755 345,750", "310,795 335,800 330,820", "265,797 262,843", "385,668 425,660", "343,700 320,700", "310,795 290,825 275,845",
  "355,475 385,480 400,500 430,510", "400,590 450,580 465,555", "470,430 500,440 540,455 560,440", "470,400 520,405 545,435 600,420", "500,465 540,460 575,470", "500,495 545,495 560,470", "470,430 470,400", "284,330 325,340", "270,300 308,300", "290,350 330,345",
];

function WorldMap() {
  return (
    <svg width="1472" height="366" viewBox="274 587 1472 366" className="block">
      <g transform="translate(640 575) scale(.33333)" strokeLinejoin="round">
        {westGray.map((d) => <path key={d} d={land(d)} fill="#e9e9e9" />)}
        <path d={land("655,715 680,700", 0.2, false)} fill="none" stroke="#cfcfcf" strokeWidth="3" />
        <path d={land("748,825 755,808 775,812", 0.2, false)} fill="none" stroke="#cfcfcf" strokeWidth="3" />
        {west.map(([f, d]) => <path key={d} d={land(d)} fill={f} stroke="#666" strokeWidth="4" />)}
        <path d={land("585,372 600,366 618,378 605,385")} fill="#fff" stroke="#686868" strokeWidth="3.600" />
        <path d={land("602,400 610,392 608,420 602,425")} fill="#fff" stroke="#686868" strokeWidth="3.600" />
        <path d={land("712,372 740,362 765,368 750,390 735,376")} fill="#fff" stroke="#686868" strokeWidth="3" />
        {westBold.map((d) => <path key={d} d={land(d, 0.75, false)} fill="none" stroke="#686868" strokeWidth="5.500" />)}
        {[[425, 517], [941, 450], [960, 458], [1009, 491], [638, 617], [920, 714], [928, 443]].map(([x, y]) => <rect key={`${x}`} x={x} y={y} width="4" height="3" fill="#777" />)}
      </g>
      <g transform="translate(960 575) scale(.33333)" strokeLinejoin="round">
        {eastGray.map((d) => <path key={d} d={land(d, 0.2)} fill="#e9e9e9" />)}
        {grayBorders.map((d) => <path key={d} d={land(d, 0.3, false)} fill="none" stroke="#bfbfbf" strokeWidth="2.600" />)}
        {east.map(([f, d]) => <path key={d} d={land(d)} fill={f} stroke="#666" strokeWidth="4" />)}
        <path d="M303 870l6-6 8 4-3 9-8 1z" fill="#e9e9e9" stroke="#686868" strokeWidth="3" />
        <path d="M104 425L106 440L102 462" fill="none" stroke="#686868" strokeWidth="3" />
        {eastBold.map((d) => <path key={d} d={land(d, 0.75, false)} fill="none" stroke="#686868" strokeWidth="5.500" />)}
        {[[790, 596], [816, 625], [870, 538], [910, 543], [1035, 546], [1176, 1022], [1122, 1048], [775, 720], [800, 725], [820, 722], [862, 712], [870, 730], [900, 735], [830, 640], [50, 491], [160, 440], [172, 434], [880, 545]].map(([x, y]) => <rect key={`${x}-${y}`} x={x} y={y} width="5" height="5" fill="#707070" />)}
      </g>
    </svg>
  );
}

const dash = "h-[2px] w-[155px] bg-[repeating-linear-gradient(90deg,#a3b5d0_0_10px,transparent_10px_12px)]";

function LegendZone() {
  return (
    <div className="relative flex h-[849px] w-[164px] shrink-0 flex-col border-2 border-[#54738f] bg-white">
      <div className="absolute -left-[20px] -top-[2px] flex h-[63px] w-[20px] flex-col items-center bg-[#54738f] pr-[3px] pt-[5px]">
        <Icon w={11} h={11} c="#fff" sw={1.600}><path d="M0.500 0.500L10.500 10.500M10.500 0.500L0.500 10.500" /></Icon>
        <svg width="10" height="15" className="mt-[7px] block"><path d="M1 1H9M5 9V15" stroke="#fff" strokeWidth="1.400" /><path d="M3 1H7V6L9.500 9H0.500L3 6Z" fill="#fff" /></svg>
        <svg width="8" height="5" className="mt-[12px] block"><path d="M0 0H8L4 4.500Z" fill="#fff" /></svg>
      </div>
      <div className="absolute left-[55px] -top-[2px] flex h-[14px] w-[50px] flex-col items-center gap-[3px] rounded-b-[2px] bg-[#54738f] pt-[5px]">
        <div className="h-px w-[40px] bg-white" /><div className="h-px w-[40px] bg-white" />
      </div>
      <div className="h-[25px] pl-[4px] pt-[2px]"><Fit w={41} className="text-[15px] leading-6 text-[#333]">genre</Fit></div>
      <div className="flex flex-col pl-[7px]">
        <div className="flex h-[21px] items-center gap-[5px]"><div className="size-[14px] bg-[#4e79a7]" /><Fit w={46} className="text-[15.500px] font-light leading-5 text-[#333]">Action</Fit></div>
        <div className="flex h-[21px] items-center gap-[5px]"><div className="size-[14px] bg-[#59a14f]" /><Fit w={56} className="text-[15.500px] font-light leading-5 text-[#333]">Comedy</Fit></div>
        <div className="flex h-[21px] items-center gap-[5px]"><div className="size-[14px] bg-[#b6992d]" /><Fit w={47} className="text-[15.500px] font-light leading-5 text-[#333]">Drama</Fit></div>
      </div>
      <div className={`mt-[5px] ml-px shrink-0 ${dash}`} />
      <div className="h-[28px]  pl-[4px]"><Fit w={56} className="text-[15px] leading-6 text-[#333]">runtime</Fit></div>
      <div className="ml-[8px] h-[16px] w-[144px] shrink-0 border border-[#aaa89c] bg-[linear-gradient(90deg,#c0e5da,#4ca3bb_50%,#345f8c)]" />
      <div className="flex h-[25px] shrink-0 items-center justify-between pb-[2px] pl-[8px] pr-[9px] text-[17px] text-[#444]" dir="ltr"><Fit w={29}>٥٥,٠</Fit><Fit w={38}>٣٦٦,٠</Fit></div>
      <div className={`mt-[2px] ml-px shrink-0 ${dash}`} />
      <div className="ml-px mt-[2px] mb-px mr-[2px] grow bg-[repeating-linear-gradient(45deg,#fff_0_4.150px,#d3dde7_4.150px_4.950px)]" />
    </div>
  );
}

function Dashboard() {
  return (
    <main className="flex grow bg-white pl-[6px] pt-[6px]">
      <div className="flex w-[1481px] shrink-0 flex-col">
        <section className="relative mr-[-3px] flex h-[426px] flex-col border-2 border-[#bfbfbf]">
          <h2 className="h-[49px] pl-[9px] pt-[7px]"><Fit w={392} className="text-[26px] leading-[36px] text-[#333]">TopGenreByRunTime(2010-2020)</Fit></h2>
          <LineChart />
          <div className="absolute -bottom-[1px] left-0 h-[2px] w-full bg-[repeating-linear-gradient(90deg,#9fb1cc_0_21px,#d5dce6_21px_24px)]" />
        </section>
        <h2 className="h-[49px] pl-[9px] pt-[4px]"><Fit w={251} className="text-[25px] leading-[36px] text-[#333]">Runtime_for_countries</Fit></h2>
        <section className="relative ml-[6px] h-[368px] w-[1473px] border border-[#e4e4e4]">
          <WorldMap />
          <div className="absolute bottom-0 left-[2px] flex h-[17px] w-[207px] items-center bg-[#fafafa] pl-[3px] font-['Liberation_Sans'] text-[12.500px] text-[#444]"><Fit w={201}>© 2022 Mapbox © OpenStreetMap</Fit></div>
          <div className="absolute bottom-[4px] right-[5px] flex h-[26px] w-[112px] items-center justify-center rounded-[3px] bg-[linear-gradient(90deg,#b9b9b9,#a6a6a6)] text-[16px] font-bold text-white"><Fit w={96}>٢٤ unknown</Fit></div>
        </section>
      </div>
      <LegendZone />
    </main>
  );
}

const DashIcon = () => <Icon w={12} h={13} c="#666" className="mr-[4px] mt-[-2px]"><path d="M0.500 1.500H10.500V11.500H0.500ZM5.500 1.500V11.500M0.500 6.500H10.500" /></Icon>;

const tabs: [string, string, number, boolean][] = [
  ["w-[211px]", "ActorsComparsionByGross", 188, false], ["w-[244px]", "Avg.Gross&Budget(2000-2010)", 221, false], ["w-[107px]", "Top10_score", 88, false],
  ["w-[250px]", "TopGenreByRunTime(2010-202...", 234, false], ["w-[122px]", "Dashboard 1", 86, true], ["w-[124px]", "Dashboard 2", 88, true],
  ["w-[124px]", "Dashboard 3", 88, true], ["w-[125px]", "Dashboard 4", 88, true], ["w-[124px]", "Dashboard 5", 91, true], ["w-[98px]", "Total Gross", 79, false], ["w-[108px]", "Total Budget", 88, false],
];

function TabStrip() {
  return (
    <div className="flex h-[37px] shrink-0 overflow-hidden border-t border-[#c6c6c6] bg-[#e6e6e6] text-[16px] font-light leading-5 text-[#2c2c2c]">
      <div className="flex w-[162px] shrink-0 items-center border-r border-[#c6c6c6] pl-[9px] pt-px">
        <Icon w={9} h={12} c="#666" className="mr-[6px] mt-[-2px]"><ellipse cx="4.500" cy="2.500" rx="3.500" ry="1.800" /><path d="M1 2.500V9.500Q1 11 4.500 11Q8 11 8 9.500V2.500" /></Icon>
        <Fit w={85}>Data Source</Fit>
      </div>
      <div className="flex w-[24px] shrink-0 items-center overflow-hidden border-r border-[#c6c6c6] pt-px"><Fit w={14} className="ml-[-3px]">ar</Fit></div>
      {tabs.map(([cw, t, w, d]) => (
        <div key={t} className={`flex shrink-0 items-center border-r border-[#c6c6c6] ${cw} ${d ? "pl-[8px]" : "pl-[7px]"} ${t === "Dashboard 5" ? "bg-[#fbfbfb] pb-px font-semibold text-[#444]" : "pt-px"}`}>
          {d && <DashIcon />}
          <Fit w={w}>{t}</Fit>
        </div>
      ))}
      <div className="flex w-[32px] shrink-0 items-center justify-center border-r border-[#c6c6c6]"><Icon w={17} h={18} c="#555"><path d="M12.500 8V1.500H1.500V14.500H9M4.500 12V9M7 12V6M9.500 10V8" /><path d="M12.500 9V17M8.500 13H16.500" strokeWidth="2" /></Icon></div>
      <div className="flex w-[32px] shrink-0 items-center justify-center border-r border-[#c6c6c6]"><Icon w={17} h={18} c="#555"><path d="M12.500 8V1.500H1.500V12.500H9M7 1.500V12.500M1.500 7H12.500" /><path d="M12.500 9V17M8.500 13H16.500" strokeWidth="2" /></Icon></div>
      <div className="flex grow items-center justify-center"><Icon w={17} h={18} c="#555"><path d="M7 3L1.500 1V12L7 14.500V3L12.500 1V8" /><path d="M12.500 9V17M8.500 13H16.500" strokeWidth="2" /></Icon></div>
    </div>
  );
}

function StatusBar() {
  const cell = "h-full shrink-0 border-l border-[#cfcfcf]";
  return (
    <div className="flex h-[26px] shrink-0 items-center border-t border-[#cfcfcf] bg-[#ebebeb]">
      <div className="grow" />
      <div className={`${cell} flex w-[157px] items-center pb-px pl-[6px]`}>
        <Icon w={11} h={14} c="#666" className="mr-[8px]"><circle cx="5.500" cy="3.500" r="2.500" /><path d="M1 13V10Q1 7.500 5.500 7.500Q10 7.500 10 10V13Z" /></Icon>
        <Fit w={103} className="text-[14px] leading-5 text-[#111]">Mohamed&nbsp; Batr...</Fit>
        <svg width="8" height="5" className="ml-[10px] block"><path d="M0 0H8L4 5Z" fill="#111" /></svg>
      </div>
      <div className={`${cell} w-[32px]`} /><div className={`${cell} w-[32px]`} /><div className={`${cell} w-[57px]`} />
      <div className={`${cell} flex w-[71px] items-center justify-around pb-[2px]`}>
        <svg width="9" height="9"><path d="M1 0V9M8 0.500L3 4.500L8 8.500Z" fill="#555" stroke="#555" strokeWidth="1" /></svg>
        <svg width="7" height="9"><path d="M6 0.500L1 4.500L6 8.500Z" fill="#555" /></svg>
        <svg width="7" height="9"><path d="M1 0.500L6 4.500L1 8.500Z" fill="#555" /></svg>
        <svg width="9" height="9"><path d="M8 0V9M1 0.500L6 4.500L1 8.500Z" fill="#555" stroke="#555" strokeWidth="1" /></svg>
      </div>
      <div className={`${cell} flex w-[68px] items-center gap-[11px] pb-[2px] pl-[8px]`}>
        <svg width="11" height="11" fill="#bdbdbd"><path d="M0 0h3v3H0zM4 0h3v3H4zM8 0h3v3H8zM0 4h3v3H0zM4 4h3v3H4zM8 4h3v3H8zM0 8h3v3H0zM4 8h3v3H4zM8 8h3v3H8z" /></svg>
        <svg width="11" height="11" fill="#bdbdbd"><path d="M0 0h11v7H0zM0 8h3v3H0zM4 8h3v3H4zM8 8h3v3H8z" /></svg>
        <svg width="11" height="11"><rect width="11" height="11" fill="#606060" /></svg>
      </div>
    </div>
  );
}

function MBadge() {
  return <div className="absolute left-[12px] top-[13px] flex size-[20px] items-center justify-center rounded-full bg-[#728a97] pb-[2px] text-[13px] font-semibold leading-none text-white">m</div>;
}

function TaskApp({ w, on, active, children }: { w: string; on?: boolean; active?: boolean; children: ReactNode }) {
  return (
    <div className={`flex h-full shrink-0 flex-col items-center justify-between ${w} ${active ? "bg-[#4b4b4b]" : ""}`}>
      <div className="relative mt-[9px] h-[32px] w-[30px]">{children}</div>
      {on && <div className={`h-[3px] bg-[#76b9ed] ${active ? "w-full" : "w-[51px]"}`} />}
    </div>
  );
}

function Taskbar() {
  return (
    <div className="flex h-[50px] shrink-0 items-center bg-[#1d1d1d] text-white">
      <div className="w-[59px] pl-[19px]"><svg width="20" height="20" fill="#fff"><path d="M0 2.700L8 1.600V9.500H0ZM9 1.400L20 0V9.500H9ZM0 10.500H8V18.400L0 17.300ZM9 10.500H20V20L9 18.600Z" /></svg></div>
      <div className="flex h-full w-[430px] shrink-0 items-center border border-[#5a5a5a] bg-[#323232] pl-[14px]">
        <Icon w={21} h={21} c="#f0f0f0" sw={1.500} className="mr-[14px]"><circle cx="13" cy="8" r="6.800" /><path d="M8 13L1 20" /></Icon>
        <Fit w={164} className="text-[18.500px] leading-6 text-[#d6d6d6]">Type here to search</Fit>
        <svg width="90" height="38" viewBox="395 1036 90 38" className="ml-[122px] block">
          <defs>
            <radialGradient id="pearl" cx=".6" cy=".3"><stop offset="0" stopColor="#f2f4ff" /><stop offset=".6" stopColor="#ccd3fb" /><stop offset="1" stopColor="#98a6ea" /></radialGradient>
            <radialGradient id="gold" cx=".6" cy=".3"><stop offset="0" stopColor="#fff3a8" /><stop offset="1" stopColor="#efb52c" /></radialGradient>
          </defs>
          <circle cx="397" cy="1070.500" r="2" fill="#f6a821" /><circle cx="403" cy="1070" r="2.700" fill="url(#gold)" /><circle cx="411" cy="1068.500" r="4" fill="url(#gold)" />
          <circle cx="422.500" cy="1066.500" r="6.200" fill="url(#pearl)" /><circle cx="438.500" cy="1063" r="9.500" fill="url(#pearl)" /><circle cx="465.500" cy="1055" r="17.500" fill="url(#pearl)" />
        </svg>
      </div>
      <TaskApp w="w-[62px]"><Icon w={22} h={22} c="#f2f2f2" sw={1.300} className="ml-[3px] mt-[5px]"><path d="M1.500 1V4.500H12.500V1M1.500 7H12.500V15H1.500ZM1.500 21V17.500H12.500V21M18.500 1V4M18.500 10.500V21" /><path d="M17 6H20.500V9H17Z" fill="#fff" stroke="none" /></Icon></TaskApp>
      <TaskApp w="w-[63px]">
        <svg width="30" height="32"><path d="M8.500 7V3Q8.500 2 9.500 2H20.500Q21.500 2 21.500 3V7" fill="none" stroke="#28b4ee" strokeWidth="2.200" /><path d="M0 6H30V28Q30 31 27 31H3Q0 31 0 28Z" fill="#f4f4f4" /><path d="M9 13h5.500v5.500H9z" fill="#f25022" /><path d="M15.500 13H21v5.500h-5.500z" fill="#7fba00" /><path d="M9 19.500h5.500V25H9z" fill="#00a4ef" /><path d="M15.500 19.500H21V25h-5.500z" fill="#ffb900" /></svg>
      </TaskApp>
      <TaskApp w="w-[62px]" on>
        <svg width="30" height="31" viewBox="0 0 30 31"><defs><linearGradient id="edgeTop"><stop offset="0" stopColor="#1f9be0" /><stop offset=".6" stopColor="#36c8c4" /><stop offset="1" stopColor="#65e05a" /></linearGradient></defs>
          <path d="M0 15Q1 0 15 0Q29 1 30 13Q29 20 20 20Q17 19 19 16Q19 9 11 9Q4 9 0 15Z" fill="url(#edgeTop)" /><path d="M0 15Q4 9 11 9Q18 9.500 19 15Q14 11 11 17Q9 28 19 30Q1 33 0 15Z" fill="#1784d8" /><path d="M11 16Q9 24 17 26Q23 27 28 23Q23 31 15 31Q8 30 8 22Q8 18 11 16Z" fill="#16509a" /></svg>
      </TaskApp>
      <TaskApp w="w-[62px]">
        <svg width="30" height="32" className="ml-px"><path d="M0 4H11L14 7H26V15H0Z" fill="#e3a21a" /><path d="M0 8H12L14 7H28V27H0Z" fill="#fdd566" /><path d="M5 27V18Q5 16 7 16H21Q23 16 23 18V27H18V22H10V27Z" fill="#3f94dc" /></svg>
      </TaskApp>
      <TaskApp w="w-[62px]">
        <svg width="30" height="32"><rect x="16" y="1" width="10" height="30" fill="#d99a0b" /><rect x="9" y="8" width="10" height="23" fill="#efbf28" /><rect x="2" y="16" width="10" height="15" fill="#f8df6e" /></svg>
      </TaskApp>
      <TaskApp w="w-[61px]" on active><div className="ml-px mt-px flex h-[28px] w-[28px] items-center justify-center bg-white"><Mark size={25} colors={["#2b7aa8", "#32739a", "#32739a", "#32739a", "#32739a", "#5d93b5"]} /></div></TaskApp>
      <TaskApp w="w-[63px]">
        <svg width="31" height="31" viewBox="0 0 31 31"><path d="M1 9L4 7L23 22V30L1 12Z" fill="#0f73b9" /><path d="M1 22L4 24L23 9V1L1 19Z" fill="#1987d3" /><path d="M22 0L30 4V27L22 31Q23 30 23 28V3Q23 1 22 0Z" fill="#35a8ee" /></svg>
      </TaskApp>
      <TaskApp w="w-[62px]">
        <svg width="30" height="32"><path d="M3 4V19Q10 23 18 19V4Z" fill="#f9e06a" /><path d="M11 4H18V19Q14 21 11 20Z" fill="#f2c400" /><ellipse cx="10.500" cy="4.500" rx="7.500" ry="3" fill="#e9a868" /><path d="M21 3H27V9M1.500 22V28H8" fill="none" stroke="#3f9a50" strokeWidth="2.500" /><path d="M14 28L24 18M15 17L25 27" stroke="#0e62a8" strokeWidth="2.400" /><path d="M11 17L17 13L18 17L14 20ZM21 17L25 13L24 17L28 16L25 20Z" fill="#0e62a8" /></svg>
      </TaskApp>
      <TaskApp w="w-[62px]" on><svg width="30" height="32"><rect y="5" width="30" height="21" rx="5" fill="#f50b0b" /><path d="M12 10L20 15.500L12 21Z" fill="#fff" /></svg><MBadge /></TaskApp>
      <TaskApp w="w-[62px]" on>
        <svg width="30" height="31" viewBox="0 0 30 30"><path d="M15 15L2 7.500A15 15 0 0 1 28 7.500Z" fill="#e23a2e" /><path d="M15 15L28 7.500A15 15 0 0 1 15 30Z" fill="#fcc31e" /><path d="M15 15L15 30A15 15 0 0 1 2 7.500Z" fill="#2e9e48" /><circle cx="15" cy="15" r="7" fill="#fff" /><circle cx="15" cy="15" r="5.500" fill="#3477e0" /></svg><MBadge />
      </TaskApp>
      <div className="grow" />
      <svg width="30" height="30" className="mr-[8px] block"><defs><linearGradient id="moon" x2="0" y2="1"><stop offset="0" stopColor="#fbd04b" /><stop offset="1" stopColor="#ef7a1a" /></linearGradient></defs><path d="M17 0Q29 4 29 15Q27 28 14 29Q4 28 0 19Q9 22 15 15Q20 8 17 0Z" fill="url(#moon)" /></svg>
      <Fit w={38} className="mr-[13px] text-[17px] leading-6">20°C</Fit>
      <Fit w={88} className="mr-[33px] text-[17px] leading-6">سماء صافية</Fit>
      <Icon w={17} h={10} c="#fff" sw={1.500} className="mr-[10px]"><path d="M1 9L8.500 1L16 9" /></Icon>
      <Icon w={23} h={18} c="#fff" sw={1.300} className="mr-[7px]"><path d="M8 4.500H20V14.500H4V11M20.500 7.500H22V11.500H20.500M1 3V6Q1 8 3.500 8Q6 8 6 6V3ZM2 0.500V3M5 0.500V3M3.500 8V11" /><path d="M9 7H14V12H7Z" fill="#fff" /></Icon>
      <Icon w={22} h={18} c="#fff" sw={1.300} className="mr-[12px]"><path d="M1 6.500H4.500L9 2.500V15.500L4.500 11.500H1ZM12 6Q14 9 12 12M15 3.500Q18 9 15 14.500M18 1Q23 9 18 17" /></Icon>
      <Icon w={17} h={17} c="#fff" sw={1.300} className="mr-[13px]"><path d="M1 16Q1 1 16 1M5 16Q5 5.500 16 5.500M9 16Q9 10 16 10" opacity=".9" /><circle cx="14" cy="14.500" r="1.500" fill="#fff" /></Icon>
      <Fit w={29} className="mr-[16px] text-[15px] leading-6">ENG</Fit>
      <div className="mr-[4px] flex w-[62px] flex-col items-center pb-[2px] text-[14.500px] leading-[22px]"><Fit w={47}>10:52 م</Fit><Fit w={61} className="text-[14px]">٢٠٢٢/١٢/١١</Fit></div>
      <div className="relative ml-[19px] mr-[24px] size-[21px]">
        <svg width="21" height="21" className="mt-[-2px] block"><path d="M0 1H21V17H13L10 21V17H0Z" fill="#fff" /><path d="M4 5.500H17M4 9H17M4 12.500H11" stroke="#222" strokeWidth="1.300" /></svg>
        <div className="absolute left-[9px] top-[9px] flex size-[21px] items-center justify-center rounded-full border border-[#999] bg-[#333] text-[15px] leading-none">٣</div>
      </div>
      <div className="h-full w-[4px] border-l border-[#555]" />
    </div>
  );
}

export default function App() {
  return (
    <div className="flex h-[1080px] w-[1917px] flex-col overflow-hidden bg-white font-['Open_Sans','Noto_Sans','DejaVu_Sans',sans-serif]">
      <header className="flex h-[54px] shrink-0 flex-col">
        <div className="flex h-[30px] items-center">
          <div className="ml-[2px] mr-[6px] flex size-[18px] items-center justify-center border-b-2 border-r-2 border-[#c4c4c4] bg-[#f0f0f0]"><Mark size={15} colors={["#2c7fb8", "#4a90b5", "#4a90b5", "#4a90b5", "#4a90b5", "#7fb3ce"]} /></div>
          <Fit w={150} className="text-[14.500px] leading-5 text-[#111]">Tableau Public - Book1</Fit>
          <div className="grow" />
          <Icon w={12} h={12} c="#111" className="mr-[46px]"><path d="M0 7.500H12" /></Icon>
          <Icon w={13} h={13} c="#111" className="mr-[46px]"><path d="M0.500 3H10V12.500H0.500ZM3 3V0.500H12.500V10H10" /></Icon>
          <Icon w={13} h={13} c="#111" className="mr-[23px]"><path d="M0.500 0.500L12 12M12 0.500L0.500 12" /></Icon>
        </div>
        <nav className="flex gap-[16px] pl-[7px] pt-px text-[14.500px] leading-[26px] text-[#111]">
          {menu.map(([a, u, b, w]) => <Fit key={a + u + b} w={w}>{a}<span className="underline underline-offset-2">{u}</span>{b}</Fit>)}
        </nav>
      </header>
      <Toolbar />
      <div className="flex h-[862px] shrink-0">
        <Sidebar />
        <Dashboard />
      </div>
      <TabStrip />
      <StatusBar />
      <Taskbar />
    </div>
  );
}
